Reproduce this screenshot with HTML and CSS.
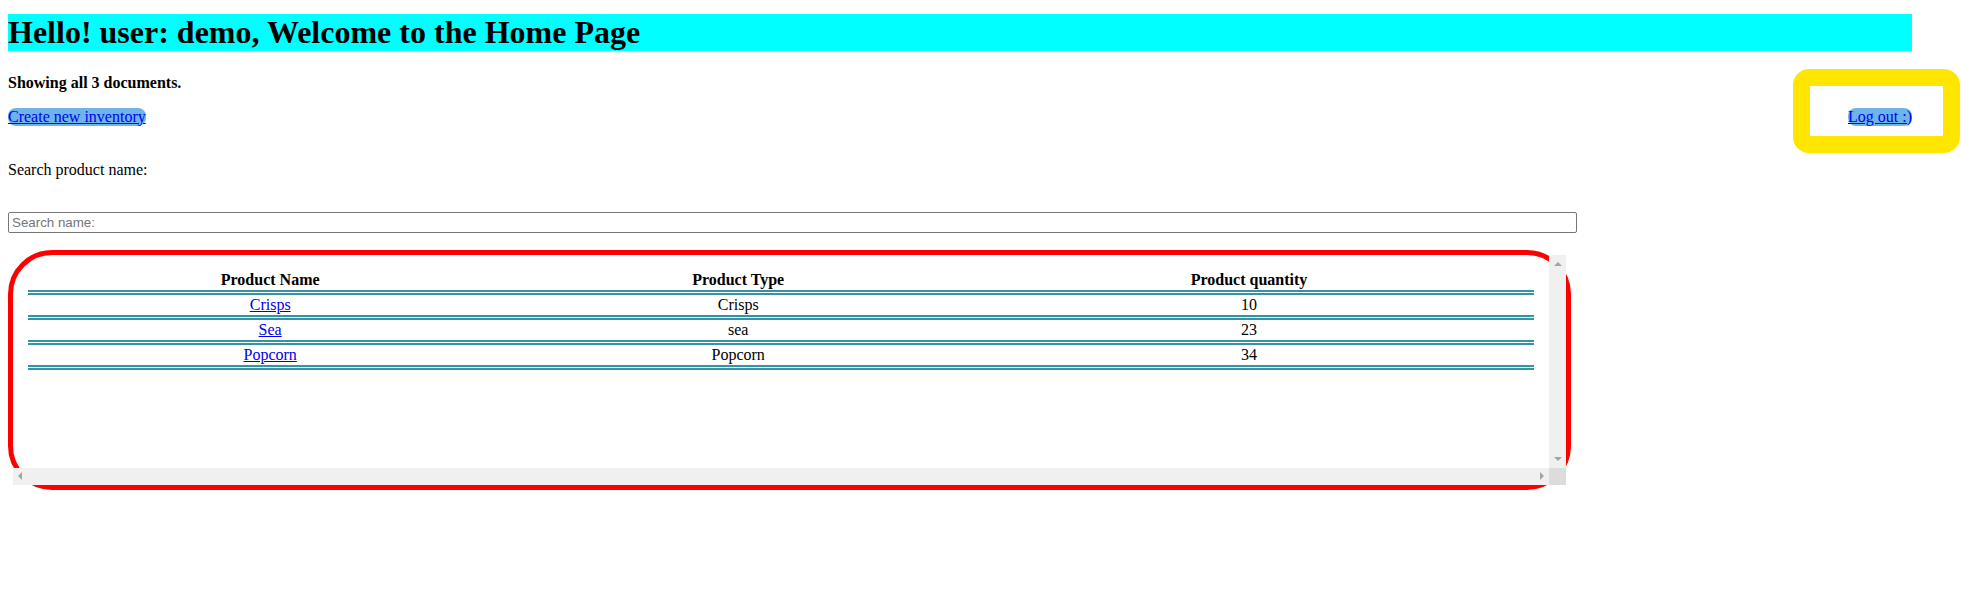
FILE: index.html
```html
<!DOCTYPE html>
<html lang="en">
<head>
<meta charset="utf-8">
<title>Home Page</title>
<link rel="stylesheet" href="styles.css">
</head>
<body>
<h1 class="title">Hello! user: demo, Welcome to the Home Page</h1>
<p class="count">Showing all 3 documents.</p>
<div class="toolbar">
  <a class="pill" href="#">Create new inventory</a>
  <a class="pill" href="#">Log out :)</a>
</div>
<p class="label">Search product name:</p>
<input class="search" type="text" placeholder="Search name:">
<div class="frame">
  <div class="content">
    <table class="products">
      <thead>
        <tr><th>Product Name</th><th>Product Type</th><th>Product quantity</th></tr>
      </thead>
      <tbody>
        <tr><td><a href="#">Crisps</a></td><td>Crisps</td><td>10</td></tr>
        <tr><td><a href="#">Sea</a></td><td>sea</td><td>23</td></tr>
        <tr><td><a href="#">Popcorn</a></td><td>Popcorn</td><td>34</td></tr>
      </tbody>
    </table>
  </div>
  <div class="vbar"><span class="arr-up"></span><span class="arr-down"></span></div>
  <div class="hbar"><span class="arr-left"></span><span class="arr-right"></span></div>
  <div class="corner"></div>
</div>
<div class="mark"></div>
</body>
</html>
```
FILE: styles.css
```css
html, body {
  margin: 0;
  background: #ffffff;
}
body {
  padding: 14px 0 0 8px;
  font-family: "Liberation Serif", "Times New Roman", serif;
  font-size: 16px;
  color: #000;
}
.title {
  margin: 0 0 22.5px;
  width: 1904px;
  font-size: 32px;
  font-weight: bold;
  background: #00ffff;
}
.count {
  margin: 0;
  font-weight: bold;
}
.toolbar {
  margin-top: 16px;
  width: 1904px;
  display: flex;
  justify-content: space-between;
  align-items: flex-start;
}
a {
  color: #0000ee;
  text-decoration: underline;
}
.pill {
  background: #6cb4ea;
  border-radius: 8px;
}
.label {
  margin: 35.6px 0 0;
}
.search {
  display: block;
  margin: 32.5px 0 0;
  width: 1569px;
  height: 21px;
  box-sizing: border-box;
  border: 1px solid #767676;
  border-radius: 2px;
  padding: 1px 3px;
  font-family: "Liberation Sans", Arial, sans-serif;
  font-size: 13.333px;
  color: #000;
  background: #fff;
}
.search::placeholder {
  color: #757575;
}
.frame {
  margin-top: 17px;
  width: 1563px;
  height: 240px;
  box-sizing: border-box;
  border: 5px solid #ff0000;
  border-radius: 44px;
  display: grid;
  grid-template-columns: 1fr 17px;
  grid-template-rows: 1fr 17px;
}
.content {
  padding: 15px;
  overflow: hidden;
  min-width: 0;
  min-height: 0;
}
.products {
  width: 100%;
  border-collapse: collapse;
}
.products th,
.products td {
  padding: 1px;
  text-align: center;
  border-bottom: 5px double #3593a8;
}
.products th {
  font-weight: bold;
}
.vbar {
  background: #f0f0f0;
  display: flex;
  flex-direction: column;
  align-items: center;
  justify-content: space-between;
  padding: 7px 0 7px;
}
.hbar {
  background: #f0f0f0;
  display: flex;
  align-items: center;
  justify-content: space-between;
  padding: 0 5px;
}
.corner {
  background: #dcdcdc;
}
.arr-up {
  width: 0;
  height: 0;
  border-left: 4px solid transparent;
  border-right: 4px solid transparent;
  border-bottom: 4px solid #a3a3a3;
}
.arr-down {
  width: 0;
  height: 0;
  border-left: 4px solid transparent;
  border-right: 4px solid transparent;
  border-top: 4px solid #a3a3a3;
}
.arr-left {
  width: 0;
  height: 0;
  border-top: 4px solid transparent;
  border-bottom: 4px solid transparent;
  border-right: 4px solid #a3a3a3;
}
.arr-right {
  width: 0;
  height: 0;
  border-top: 4px solid transparent;
  border-bottom: 4px solid transparent;
  border-left: 4px solid #a3a3a3;
}
.mark {
  position: absolute;
  left: 1793px;
  top: 69px;
  width: 167px;
  height: 84px;
  box-sizing: border-box;
  border: 17px solid #ffe600;
  border-radius: 16px;
  pointer-events: none;
}
```
